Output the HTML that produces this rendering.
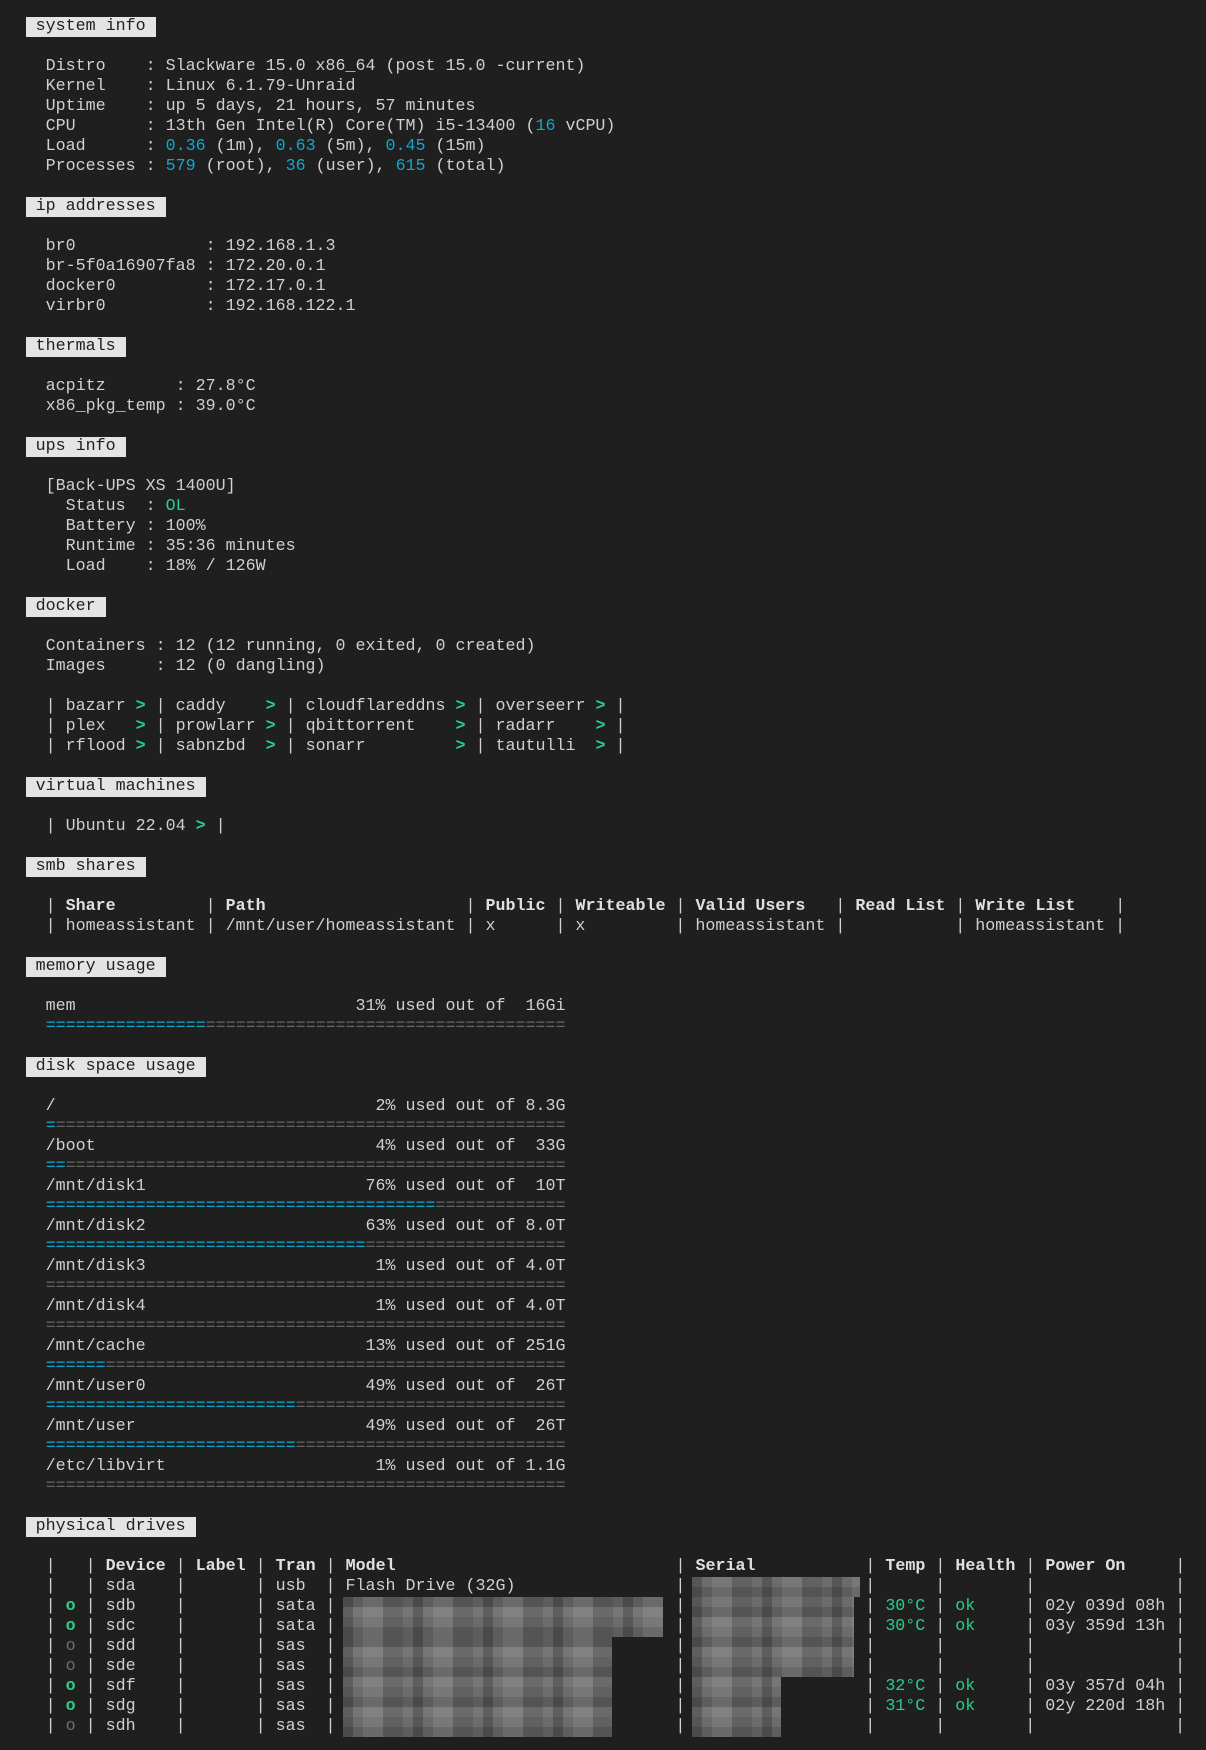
<!DOCTYPE html>
<html><head><meta charset="utf-8">
<style>
html,body{margin:0;padding:0;background:#1f1f1f;}
body{width:1206px;height:1750px;position:relative;overflow:hidden;}
pre{position:absolute;left:25.7px;top:16.7px;margin:0;font-family:"Liberation Mono",monospace;font-size:16.67px;line-height:20px;color:#d0d0d0;}
.h{display:inline-block;background:#e4e4e4;color:#1f1f1f;height:20px;line-height:20px;vertical-align:top;}
.c{color:#11a8cd}
.g{color:#23d18b;font-weight:bold}
.gn{color:#23d18b}
.d{color:#6e6e6e}
.bc{color:#11a8cd}
.bg{color:#666}
b{font-weight:bold;color:#e0e0e0}
.m{position:absolute;background-color:#6c6c6c;
background-image:
repeating-linear-gradient(90deg,rgba(0,0,0,.2) 0 10px,transparent 10px 20px,rgba(255,255,255,.08) 20px 40px,rgba(0,0,0,.1) 40px 60px,transparent 60px 70px),
repeating-linear-gradient(0deg,rgba(0,0,0,.14) 0 10px,transparent 10px 20px,rgba(255,255,255,.07) 20px 30px);}
</style></head><body>
<pre><span class="h"> system info </span>

  Distro    : Slackware 15.0 x86_64 (post 15.0 -current)
  Kernel    : Linux 6.1.79-Unraid
  Uptime    : up 5 days, 21 hours, 57 minutes
  CPU       : 13th Gen Intel(R) Core(TM) i5-13400 (<span class="c">16</span> vCPU)
  Load      : <span class="c">0.36</span> (1m), <span class="c">0.63</span> (5m), <span class="c">0.45</span> (15m)
  Processes : <span class="c">579</span> (root), <span class="c">36</span> (user), <span class="c">615</span> (total)

<span class="h"> ip addresses </span>

  br0             : 192.168.1.3
  br-5f0a16907fa8 : 172.20.0.1
  docker0         : 172.17.0.1
  virbr0          : 192.168.122.1

<span class="h"> thermals </span>

  acpitz       : 27.8°C
  x86_pkg_temp : 39.0°C

<span class="h"> ups info </span>

  [Back-UPS XS 1400U]
    Status  : <span class="gn">OL</span>
    Battery : 100%
    Runtime : 35:36 minutes
    Load    : 18% / 126W

<span class="h"> docker </span>

  Containers : 12 (12 running, 0 exited, 0 created)
  Images     : 12 (0 dangling)

  | bazarr <span class="g">&gt;</span> | caddy    <span class="g">&gt;</span> | cloudflareddns <span class="g">&gt;</span> | overseerr <span class="g">&gt;</span> |
  | plex   <span class="g">&gt;</span> | prowlarr <span class="g">&gt;</span> | qbittorrent    <span class="g">&gt;</span> | radarr    <span class="g">&gt;</span> |
  | rflood <span class="g">&gt;</span> | sabnzbd  <span class="g">&gt;</span> | sonarr         <span class="g">&gt;</span> | tautulli  <span class="g">&gt;</span> |

<span class="h"> virtual machines </span>

  | Ubuntu 22.04 <span class="g">&gt;</span> |

<span class="h"> smb shares </span>

  | <b>Share</b>         | <b>Path</b>                    | <b>Public</b> | <b>Writeable</b> | <b>Valid Users</b>   | <b>Read List</b> | <b>Write List</b>    |
  | homeassistant | /mnt/user/homeassistant | x      | x         | homeassistant |           | homeassistant |

<span class="h"> memory usage </span>

  mem                            31% used out of  16Gi
  <span class="bc">================</span><span class="bg">====================================</span>

<span class="h"> disk space usage </span>

  /                                2% used out of 8.3G
  <span class="bc">=</span><span class="bg">===================================================</span>
  /boot                            4% used out of  33G
  <span class="bc">==</span><span class="bg">==================================================</span>
  /mnt/disk1                      76% used out of  10T
  <span class="bc">=======================================</span><span class="bg">=============</span>
  /mnt/disk2                      63% used out of 8.0T
  <span class="bc">================================</span><span class="bg">====================</span>
  /mnt/disk3                       1% used out of 4.0T
  <span class="bg">====================================================</span>
  /mnt/disk4                       1% used out of 4.0T
  <span class="bg">====================================================</span>
  /mnt/cache                      13% used out of 251G
  <span class="bc">======</span><span class="bg">==============================================</span>
  /mnt/user0                      49% used out of  26T
  <span class="bc">=========================</span><span class="bg">===========================</span>
  /mnt/user                       49% used out of  26T
  <span class="bc">=========================</span><span class="bg">===========================</span>
  /etc/libvirt                     1% used out of 1.1G
  <span class="bg">====================================================</span>

<span class="h"> physical drives </span>

  |   | <b>Device</b> | <b>Label</b> | <b>Tran</b> | <b>Model</b>                            | <b>Serial</b>           | <b>Temp</b> | <b>Health</b> | <b>Power On</b>     |
  |   | sda    |       | usb  | Flash Drive (32G)                |                  |      |        |              |
  | <span class="g">o</span> | sdb    |       | sata |                                  |                  | <span class="gn">30°C</span> | <span class="gn">ok</span>     | 02y 039d 08h |
  | <span class="g">o</span> | sdc    |       | sata |                                  |                  | <span class="gn">30°C</span> | <span class="gn">ok</span>     | 03y 359d 13h |
  | <span class="d">o</span> | sdd    |       | sas  |                                  |                  |      |        |              |
  | <span class="d">o</span> | sde    |       | sas  |                                  |                  |      |        |              |
  | <span class="g">o</span> | sdf    |       | sas  |                                  |                  | <span class="gn">32°C</span> | <span class="gn">ok</span>     | 03y 357d 04h |
  | <span class="g">o</span> | sdg    |       | sas  |                                  |                  | <span class="gn">31°C</span> | <span class="gn">ok</span>     | 02y 220d 18h |
  | <span class="d">o</span> | sdh    |       | sas  |                                  |                  |      |        |              |
</pre>
<div class="m" style="left:343px;top:1596.7px;width:320px;height:40px;"></div>
<div class="m" style="left:343px;top:1636.7px;width:269px;height:100px;"></div>
<div class="m" style="left:692px;top:1576.7px;width:168px;height:20px;"></div>
<div class="m" style="left:692px;top:1596.7px;width:162px;height:80px;"></div>
<div class="m" style="left:692px;top:1676.7px;width:89px;height:60px;"></div>
</body></html>
